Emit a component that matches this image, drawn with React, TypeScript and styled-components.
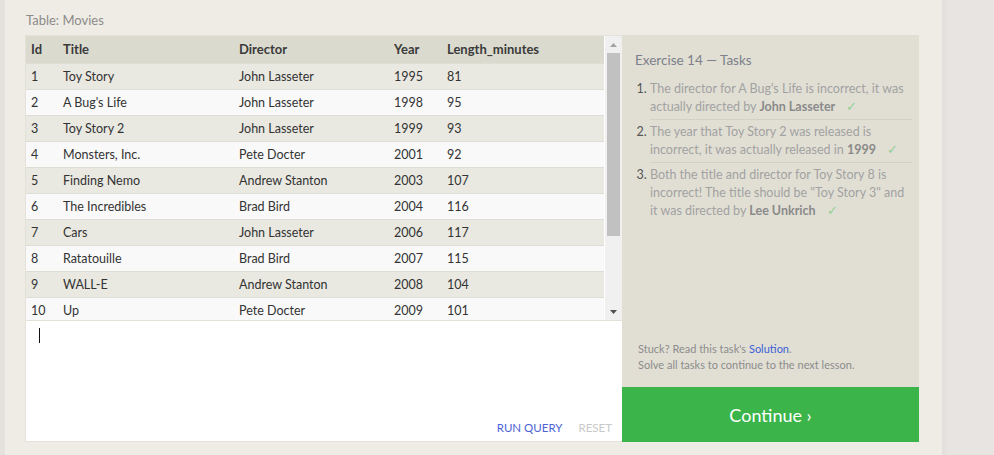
import React from "react";
import styled, { createGlobalStyle } from "styled-components";

const Global = createGlobalStyle`
  html, body { margin: 0; padding: 0; }
  body {
    font-family: Lato, "Open Sans", sans-serif;
    background: #e8e4e1;
    -webkit-font-smoothing: antialiased;
  }
`;

const Page = styled.div`
  display: flex;
  height: 455px;
  overflow: hidden;
`;

const LeftStrip = styled.div`
  width: 5px;
  background: #e5e2de;
`;

const Main = styled.div`
  width: 937px;
  background: #efece5;
  padding: 11px 0 0 20px;
  box-sizing: border-box;
`;

const Gutter = styled.div`
  flex: 1;
  background: linear-gradient(to right, #e1dedb 0px, #e8e4e1 6px);
`;

const Caption = styled.div`
  font-size: 13px;
  line-height: 18px;
  color: #8b8b8b;
  margin-bottom: 6px;
  padding-left: 1px;
`;

const Workspace = styled.div`
  display: flex;
  height: 407px;
`;

const Card = styled.div`
  width: 597px;
  box-sizing: border-box;
  border: 1px solid #e4e1d9;
  border-right: 0;
  display: flex;
  flex-direction: column;
  background: #fff;
`;

const TableViewport = styled.div`
  display: flex;
  height: 285px;
  border-bottom: 1px solid #e4e1d9;
  box-sizing: border-box;
`;

const TableClip = styled.div`
  flex: 1;
  overflow: hidden;
`;

const Table = styled.table`
  width: 578px;
  border-collapse: collapse;
  table-layout: fixed;
  font-size: 12.5px;
  color: #333;
`;

const HeadCell = styled.th<{ $w: number }>`
  box-sizing: border-box;
  width: ${(p) => p.$w}px;
  height: 27px;
  text-align: left;
  font-weight: 700;
  padding: 0 0 0 5px;
  background: #dbdacf;
  color: #3a3a3a;
  font-size: 13px;
`;

const Row = styled.tr<{ $odd: boolean }>`
  background: ${(p) => (p.$odd ? "#e9e8e1" : "#f9f9f9")};
  border-top: 1px solid #dfddd5;
`;

const Cell = styled.td`
  box-sizing: border-box;
  height: 26px;
  padding: 0 0 0 5px;
  white-space: nowrap;
`;

const ScrollTrack = styled.div`
  width: 17px;
  background: #f0f0f0;
  display: flex;
  flex-direction: column;
  align-items: center;
`;

const ScrollButton = styled.div`
  height: 17px;
  width: 17px;
  display: flex;
  align-items: center;
  justify-content: center;
`;

const Thumb = styled.div`
  width: 13px;
  height: 183px;
  background: #c1c1c1;
`;

const Spacer = styled.div`
  flex: 1;
`;

const Editor = styled.div`
  flex: 1;
  display: flex;
  flex-direction: column;
  padding: 7px 10px 5px 13px;
`;

const Caret = styled.span`
  display: block;
  width: 1px;
  height: 15px;
  background: #111;
`;

const Actions = styled.div`
  display: flex;
  justify-content: flex-end;
  gap: 16px;
  margin-top: auto;
`;

const ActionLink = styled.span<{ $muted?: boolean }>`
  font-size: 11.5px;
  line-height: 16px;
  color: ${(p) => (p.$muted ? "#c9c9c9" : "#4d62d6")};
`;

const Panel = styled.div`
  width: 297px;
  display: flex;
  flex-direction: column;
  background: #e1dfd4;
`;

const PanelBody = styled.div`
  flex: 1;
  padding: 15px 7px 0 13px;
  display: flex;
  flex-direction: column;
`;

const PanelTitle = styled.div`
  font-size: 13.5px;
  line-height: 20px;
  color: #7c808a;
`;

const TaskList = styled.ol`
  margin: 7px 0 0 0;
  padding: 0 0 0 15px;
  font-size: 12.5px;
  line-height: 18px;
  color: #a2a2a2;
`;

const Task = styled.li<{ $last?: boolean }>`
  padding: 3px 0;
  border-bottom: ${(p) => (p.$last ? "0" : "1px solid #d3d1c6")};
  &::marker {
    color: #555;
  }
`;

const Strong = styled.b`
  color: #8a8a8a;
`;

const Check = styled.span`
  color: #92d095;
  margin-left: 11px;
`;

const Help = styled.div`
  margin-top: auto;
  padding: 0 0 14px 3px;
  font-size: 11px;
  line-height: 16px;
  color: #8c8c8c;
`;

const HelpLink = styled.span`
  color: #3c5fd6;
`;

const ContinueButton = styled.div`
  height: 55px;
  background: #3bb54a;
  color: #fff;
  display: flex;
  align-items: center;
  justify-content: center;
  font-size: 18px;
`;

const columns = [
  { label: "Id", w: 32 },
  { label: "Title", w: 176 },
  { label: "Director", w: 155 },
  { label: "Year", w: 53 },
  { label: "Length_minutes", w: 162 },
];

const movies: [number, string, string, number, number][] = [
  [1, "Toy Story", "John Lasseter", 1995, 81],
  [2, "A Bug's Life", "John Lasseter", 1998, 95],
  [3, "Toy Story 2", "John Lasseter", 1999, 93],
  [4, "Monsters, Inc.", "Pete Docter", 2001, 92],
  [5, "Finding Nemo", "Andrew Stanton", 2003, 107],
  [6, "The Incredibles", "Brad Bird", 2004, 116],
  [7, "Cars", "John Lasseter", 2006, 117],
  [8, "Ratatouille", "Brad Bird", 2007, 115],
  [9, "WALL-E", "Andrew Stanton", 2008, 104],
  [10, "Up", "Pete Docter", 2009, 101],
  [11, "Toy Story 3", "Lee Unkrich", 2010, 103],
  [12, "Cars 2", "John Lasseter", 2011, 120],
  [13, "Brave", "Brenda Chapman", 2012, 102],
  [14, "Monsters University", "Dan Scanlon", 2013, 110],
];

const Arrow = ({ up, color }: { up: boolean; color: string }) => (
  <svg width="7" height="4" viewBox="0 0 7 4">
    <path d={up ? "M0 4 L3.5 0 L7 4 Z" : "M0 0 L3.5 4 L7 0 Z"} fill={color} />
  </svg>
);

export default function App() {
  return (
    <>
      <Global />
      <Page>
        <LeftStrip />
        <Main>
          <Caption>Table: Movies</Caption>
          <Workspace>
            <Card>
              <TableViewport>
                <TableClip>
                  <Table>
                    <thead>
                      <tr>
                        {columns.map((c) => (
                          <HeadCell key={c.label} $w={c.w}>
                            {c.label}
                          </HeadCell>
                        ))}
                      </tr>
                    </thead>
                    <tbody>
                      {movies.map((m, i) => (
                        <Row key={m[0]} $odd={i % 2 === 0}>
                          {m.map((v, j) => (
                            <Cell key={j}>{v}</Cell>
                          ))}
                        </Row>
                      ))}
                    </tbody>
                  </Table>
                </TableClip>
                <ScrollTrack>
                  <ScrollButton>
                    <Arrow up color="#a3a3a3" />
                  </ScrollButton>
                  <Thumb />
                  <Spacer />
                  <ScrollButton>
                    <Arrow up={false} color="#505050" />
                  </ScrollButton>
                </ScrollTrack>
              </TableViewport>
              <Editor>
                <Caret />
                <Actions>
                  <ActionLink>RUN QUERY</ActionLink>
                  <ActionLink $muted>RESET</ActionLink>
                </Actions>
              </Editor>
            </Card>
            <Panel>
              <PanelBody>
                <PanelTitle>Exercise 14 — Tasks</PanelTitle>
                <TaskList>
                  <Task>
                    The director for A Bug's Life is incorrect, it was actually directed by{" "}
                    <Strong>John Lasseter</Strong>
                    <Check>✓</Check>
                  </Task>
                  <Task>
                    The year that Toy Story 2 was released is incorrect, it was actually released in{" "}
                    <Strong>1999</Strong>
                    <Check>✓</Check>
                  </Task>
                  <Task $last>
                    Both the title and director for Toy Story 8 is incorrect! The title should be "Toy Story 3" and it was directed by{" "}
                    <Strong>Lee Unkrich</Strong>
                    <Check>✓</Check>
                  </Task>
                </TaskList>
                <Help>
                  Stuck? Read this task's <HelpLink>Solution</HelpLink>.
                  <br />
                  Solve all tasks to continue to the next lesson.
                </Help>
              </PanelBody>
              <ContinueButton>Continue ›</ContinueButton>
            </Panel>
          </Workspace>
        </Main>
        <Gutter />
      </Page>
    </>
  );
}
